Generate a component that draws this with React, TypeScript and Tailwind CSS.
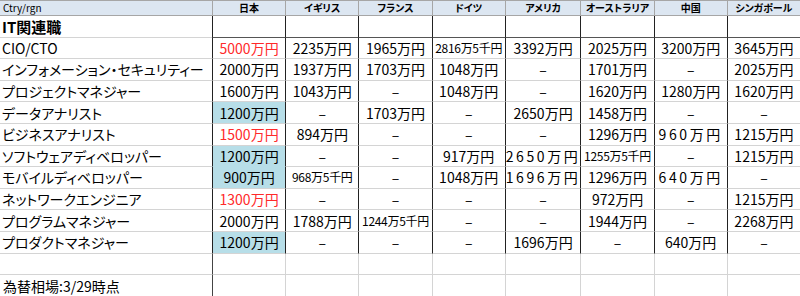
import React from "react";

type Cell = { v: string; red?: boolean; blue?: boolean; small?: boolean; wide?: boolean };

const D = "–";

const headers = ["日本", "イギリス", "フランス", "ドイツ", "アメリカ", "オーストラリア", "中国", "シンガポール"];

const c = (v: string, o: Partial<Cell> = {}): Cell => ({ v, ...o });

const rows: { label: string; cells: Cell[]; bold?: boolean }[] = [
  { label: "IT関連職", bold: true, cells: Array.from({ length: 8 }, () => c("")) },
  {
    label: "CIO/CTO",
    cells: [c("5000万円", { red: true }), c("2235万円"), c("1965万円"), c("2816万5千円", { small: true }), c("3392万円"), c("2025万円"), c("3200万円"), c("3645万円")],
  },
  {
    label: "インフォメーション・セキュリティー",
    cells: [c("2000万円"), c("1937万円"), c("1703万円"), c("1048万円"), c(D), c("1701万円"), c(D), c("2025万円")],
  },
  {
    label: "プロジェクトマネジャー",
    cells: [c("1600万円"), c("1043万円"), c(D), c("1048万円"), c(D), c("1620万円"), c("1280万円"), c("1620万円")],
  },
  {
    label: "データアナリスト",
    cells: [c("1200万円", { blue: true }), c(D), c("1703万円"), c(D), c("2650万円"), c("1458万円"), c(D), c(D)],
  },
  {
    label: "ビジネスアナリスト",
    cells: [c("1500万円", { red: true }), c("894万円"), c(D), c(D), c(D), c("1296万円"), c("960万円", { wide: true }), c("1215万円")],
  },
  {
    label: "ソフトウェアディベロッパー",
    cells: [c("1200万円", { blue: true }), c(D), c(D), c("917万円"), c("2650万円", { wide: true }), c("1255万5千円", { small: true }), c(D), c("1215万円")],
  },
  {
    label: "モバイルディベロッパー",
    cells: [c("900万円", { blue: true }), c("968万5千円", { small: true }), c(D), c("1048万円"), c("1696万円", { wide: true }), c("1296万円"), c("640万円", { wide: true }), c(D)],
  },
  {
    label: "ネットワークエンジニア",
    cells: [c("1300万円", { red: true }), c(D), c(D), c(D), c(D), c("972万円"), c(D), c("1215万円")],
  },
  {
    label: "プログラムマネジャー",
    cells: [c("2000万円"), c("1788万円"), c("1244万5千円", { small: true }), c(D), c(D), c("1944万円"), c(D), c("2268万円")],
  },
  {
    label: "プロダクトマネジャー",
    cells: [c("1200万円", { blue: true }), c(D), c(D), c(D), c("1696万円"), c(D), c("640万円"), c(D)],
  },
];

const font = "font-['Noto_Sans_CJK_JP','Noto_Sans',sans-serif]";

export default function App() {
  return (
    <div className={`w-[800px] h-[296px] overflow-hidden bg-white text-black ${font} [font-feature-settings:'palt']`}>
      <div className="grid grid-cols-[212px_repeat(8,1fr)]">
        {/* header */}
        <div className="h-[16px] bg-[#dce6f1] border-t border-b border-[#a6a6a6] flex items-center pl-[3px] text-[10px] leading-none">
          Ctry/rgn
        </div>
        {headers.map((h) => (
          <div
            key={h}
            className="h-[16px] bg-[#dce6f1] border-t border-b border-l border-[#a6a6a6] flex items-center justify-center text-[10px] font-bold leading-none"
          >
            {h}
          </div>
        ))}

        {rows.map((r, ri) => {
          const next = rows[ri + 1];
          return (
            <React.Fragment key={r.label}>
              <div
                className={`h-[21.6px] border-b border-[#d4d4d4] flex items-center pl-[2px] leading-none whitespace-nowrap ${
                  r.bold ? "text-[15px] font-bold" : "text-[14px]"
                }`}
              >
                {r.label}
              </div>
              {r.cells.map((cell, ci) => {
                const blueBelow = cell.blue && next && next.cells[ci].blue;
                return (
                  <div
                    key={ci}
                    className={`h-[21.6px] border-l border-l-[#222] border-b flex items-center justify-center leading-none whitespace-nowrap ${
                      ri === 0 ? "border-b-[#555]" : blueBelow ? "border-b-[#b7dee8]" : "border-b-[#d4d4d4]"
                    } ${cell.blue ? "bg-[#b7dee8]" : ""} ${cell.red ? "text-[#ff2a2a]" : ""} ${
                      cell.small ? "text-[12px] tracking-[-0.3px]" : "text-[14px]"
                    } ${cell.wide ? "tracking-[2.6px]" : ""}`}
                  >
                    {cell.v}
                  </div>
                );
              })}
            </React.Fragment>
          );
        })}

        {/* empty row */}
        <div className="h-[21.6px] border-b border-[#d4d4d4]" />
        {headers.map((h, i) => (
          <div
            key={"e" + h}
            className={`h-[21.6px] border-b border-b-[#d4d4d4] border-l ${i === 0 ? "border-l-[#444]" : "border-l-[#d4d4d4]"}`}
          />
        ))}

        {/* note row */}
        <div className="h-[21.6px] flex items-center pl-[3px] text-[14px] leading-none whitespace-nowrap">為替相場:3/29時点</div>
        {headers.map((h, i) => (
          <div
            key={"n" + h}
            className={`h-[21.6px] border-l ${i === 0 ? "border-l-[#444]" : "border-l-[#d4d4d4]"}`}
          />
        ))}
      </div>
    </div>
  );
}
